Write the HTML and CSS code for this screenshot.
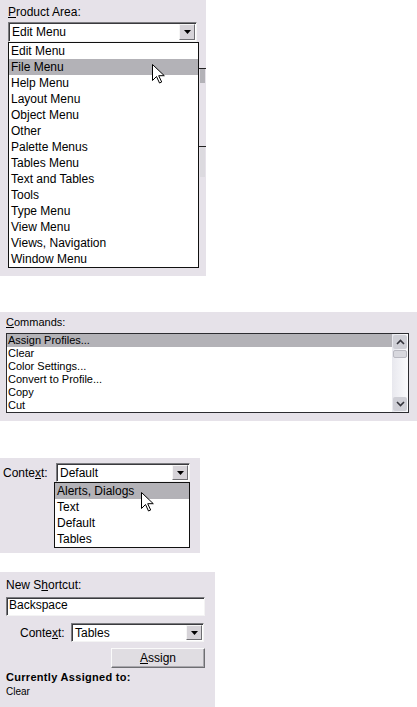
FILE: index.html
```html
<!DOCTYPE html>
<html lang="en">

<head>
    <meta charset="UTF-8">
    <meta name="viewport" content="width=device-width, initial-scale=1.0">
    <title>Keyboard Shortcuts</title>
    <link rel="stylesheet" href="styles.css">
</head>

<body>
    <!-- Product area combo, opened -->
    <div class="panel area-panel">
        <div class="label"><u>P</u>roduct Area:</div>
        <div class="combo area-combo">
            <span class="combo-value">Edit Menu</span>
            <span class="drop-btn"><svg width="7" height="4" viewBox="0 0 7 4"><path d="M0 0h7L3.5 4z" fill="#000"/></svg></span>
        </div>
        <div class="behind behind-top"></div>
        <div class="behind behind-bottom"></div>
        <ul class="droplist area-list">
            <li>Edit Menu</li>
            <li class="selected">File Menu</li>
            <li>Help Menu</li>
            <li>Layout Menu</li>
            <li>Object Menu</li>
            <li>Other</li>
            <li>Palette Menus</li>
            <li>Tables Menu</li>
            <li>Text and Tables</li>
            <li>Tools</li>
            <li>Type Menu</li>
            <li>View Menu</li>
            <li>Views, Navigation</li>
            <li>Window Menu</li>
        </ul>
        <svg class="cursor cursor-area" width="13" height="20" viewBox="0 0 13 20"><path d="M0.5 0.5v16l4-4 3 6.5 2.2-1-3-6.3h5.6z" fill="#fff" stroke="#000" stroke-width="1"/></svg>
    </div>

    <!-- Commands list -->
    <div class="panel commands-panel">
        <div class="label small"><u>C</u>ommands:</div>
        <div class="listbox">
            <ul class="command-rows">
                <li class="selected">Assign Profiles...</li>
                <li>Clear</li>
                <li>Color Settings...</li>
                <li>Convert to Profile...</li>
                <li>Copy</li>
                <li>Cut</li>
            </ul>
            <div class="scrollbar">
                <div class="scroll-btn"><svg width="9" height="6" viewBox="0 0 9 6"><path d="M1 5l3.5-3.5L8 5" fill="none" stroke="#33333b" stroke-width="1.6"/></svg></div>
                <div class="scroll-thumb"></div>
                <div class="scroll-track"></div>
                <div class="scroll-btn"><svg width="9" height="6" viewBox="0 0 9 6"><path d="M1 1l3.5 3.5L8 1" fill="none" stroke="#33333b" stroke-width="1.6"/></svg></div>
            </div>
        </div>
    </div>

    <!-- Context combo, opened -->
    <div class="panel context-panel">
        <div class="context-row">
            <div class="label">Conte<u>x</u>t:</div>
            <div class="combo context-combo">
                <span class="combo-value">Default</span>
                <span class="drop-btn"><svg width="7" height="4" viewBox="0 0 7 4"><path d="M0 0h7L3.5 4z" fill="#000"/></svg></span>
            </div>
        </div>
        <ul class="droplist context-list">
            <li class="selected">Alerts, Dialogs</li>
            <li>Text</li>
            <li>Default</li>
            <li>Tables</li>
        </ul>
        <svg class="cursor cursor-context" width="13" height="20" viewBox="0 0 13 20"><path d="M0.5 0.5v16l4-4 3 6.5 2.2-1-3-6.3h5.6z" fill="#fff" stroke="#000" stroke-width="1"/></svg>
    </div>

    <!-- New shortcut -->
    <div class="panel shortcut-panel">
        <div class="label">New S<u>h</u>ortcut:</div>
        <div class="textbox">Backspace</div>
        <div class="shortcut-context">
            <div class="label">Conte<u>x</u>t:</div>
            <div class="combo shortcut-combo">
                <span class="combo-value">Tables</span>
                <span class="drop-btn"><svg width="7" height="4" viewBox="0 0 7 4"><path d="M0 0h7L3.5 4z" fill="#000"/></svg></span>
            </div>
        </div>
        <button type="button" class="assign-btn"><u>A</u>ssign</button>
        <div class="assigned-title">Currently Assigned to:</div>
        <div class="assigned-value">Clear</div>
    </div>
</body>

</html>
```

FILE: styles.css
```css
body {
    font-family: 'Liberation Sans', Arial, sans-serif;
    font-size: 12px;
    color: #000;
    background-color: #fff;
    margin: 0;
    padding: 0;
}

ul {
    list-style: none;
    margin: 0;
    padding: 0;
}

.panel {
    position: relative;
    box-sizing: border-box;
    background-color: #e6e2e9;
}

.label {
    line-height: 16px;
    white-space: nowrap;
}

.label.small {
    font-size: 11px;
    line-height: 13px;
}

/* sunken combo box */
.combo {
    box-sizing: border-box;
    display: flex;
    align-items: center;
    background-color: #fff;
    border: 1px solid;
    border-color: #7c7c80 #f4f4f4 #f4f4f4 #7c7c80;
    box-shadow: inset 1px 1px 0 #3a3a3e;
    padding: 1px 1px 1px 3px;
}

.combo-value {
    flex: 1;
    line-height: 16px;
    white-space: nowrap;
}

.drop-btn {
    box-sizing: border-box;
    width: 16px;
    height: 100%;
    display: flex;
    align-items: center;
    justify-content: center;
    background-color: #d6d3d8;
    border: 1px solid;
    border-color: #f6f6f6 #6e6e72 #6e6e72 #f6f6f6;
}

.droplist {
    box-sizing: border-box;
    background-color: #fff;
    border: 1px solid #111;
    position: relative;
}

.droplist li {
    height: 16px;
    line-height: 16px;
    padding-left: 2px;
    white-space: nowrap;
}

.selected {
    background-color: #b3b2b7;
}

.cursor {
    position: absolute;
}

/* product area */
.area-panel {
    width: 206px;
    height: 276px;
    padding: 4px 0 0 8px;
}

.area-combo {
    margin-top: 2px;
    width: 189px;
    height: 20px;
}

.area-list {
    width: 191px;
}

/* bits of the window under the open list */
.behind {
    position: absolute;
    left: 198px;
    width: 8px;
    border-top: 1px solid #222;
}

.behind-top {
    top: 68px;
    height: 14px;
    background: linear-gradient(to right, transparent 2px, #b3b2b7 2px, #b3b2b7 7px, transparent 7px);
}

.behind-bottom {
    top: 146px;
    height: 30px;
    background: linear-gradient(to right, transparent 2px, #dcdadf 2px, #dcdadf 7px, transparent 7px);
}

.cursor-area {
    left: 152px;
    top: 64px;
}

/* commands */
.commands-panel {
    margin-top: 36px;
    height: 109px;
    padding: 4px 0 0 6px;
}

.listbox {
    box-sizing: border-box;
    margin-top: 4px;
    width: 403px;
    height: 80px;
    display: flex;
    background-color: #fff;
    border: 1px solid #2c2c30;
}

.command-rows {
    flex: 1;
    font-size: 11px;
}

.command-rows li {
    height: 13px;
    line-height: 13px;
    padding-left: 1px;
    white-space: nowrap;
}

.scrollbar {
    width: 16px;
    display: flex;
    flex-direction: column;
    background: linear-gradient(to right, #e8e8ee, #fbfbfd);
}

.scroll-btn {
    box-sizing: border-box;
    height: 14px;
    margin: 1px 1px 0;
    display: flex;
    align-items: center;
    justify-content: center;
    background-color: #cfcfd6;
    border-radius: 2px;
}

.scroll-btn:last-child {
    margin: 0 1px 1px;
}

.scroll-thumb {
    height: 6px;
    margin: 1px 1px 0;
    border-radius: 2px;
    background-color: #d8d8de;
    border: 1px solid #b9b9c1;
}

.scroll-track {
    flex: 1;
}

/* context */
.context-panel {
    margin-top: 37px;
    width: 200px;
    height: 95px;
    padding: 5px 0 0 3px;
}

.context-row {
    display: flex;
    align-items: center;
}

.context-row .label {
    width: 53px;
}

.context-combo {
    width: 134px;
    height: 19px;
}

.context-list {
    margin-left: 51px;
    width: 136px;
}

.cursor-context {
    left: 141px;
    top: 34px;
}

/* new shortcut */
.shortcut-panel {
    margin-top: 19px;
    width: 215px;
    height: 135px;
    padding: 5px 0 0 6px;
}

.textbox {
    box-sizing: border-box;
    margin-top: 4px;
    width: 199px;
    height: 19px;
    line-height: 15px;
    padding-left: 2px;
    background-color: #fff;
    border: 1px solid;
    border-color: #7c7c80 #f4f4f4 #f4f4f4 #7c7c80;
    box-shadow: inset 1px 1px 0 #3a3a3e;
}

.shortcut-context {
    display: flex;
    align-items: center;
    margin-top: 7px;
}

.shortcut-context .label {
    width: 51px;
    padding-left: 14px;
}

.shortcut-combo {
    width: 133px;
    height: 19px;
}

.assign-btn {
    display: block;
    box-sizing: border-box;
    margin: 6px 0 0 105px;
    width: 94px;
    height: 20px;
    padding: 0;
    font-family: inherit;
    font-size: 12px;
    color: #000;
    background-color: #e0dde2;
    border: 1px solid;
    border-color: #fafafa #6e6e72 #6e6e72 #fafafa;
    box-shadow: inset -1px -1px 0 #a9a7ad;
    cursor: default;
}

.assigned-title {
    margin-top: 3px;
    font-size: 11px;
    font-weight: bold;
    line-height: 13px;
    letter-spacing: 0.3px;
}

.assigned-value {
    margin-top: 2px;
    font-size: 10px;
    line-height: 12px;
}
```
